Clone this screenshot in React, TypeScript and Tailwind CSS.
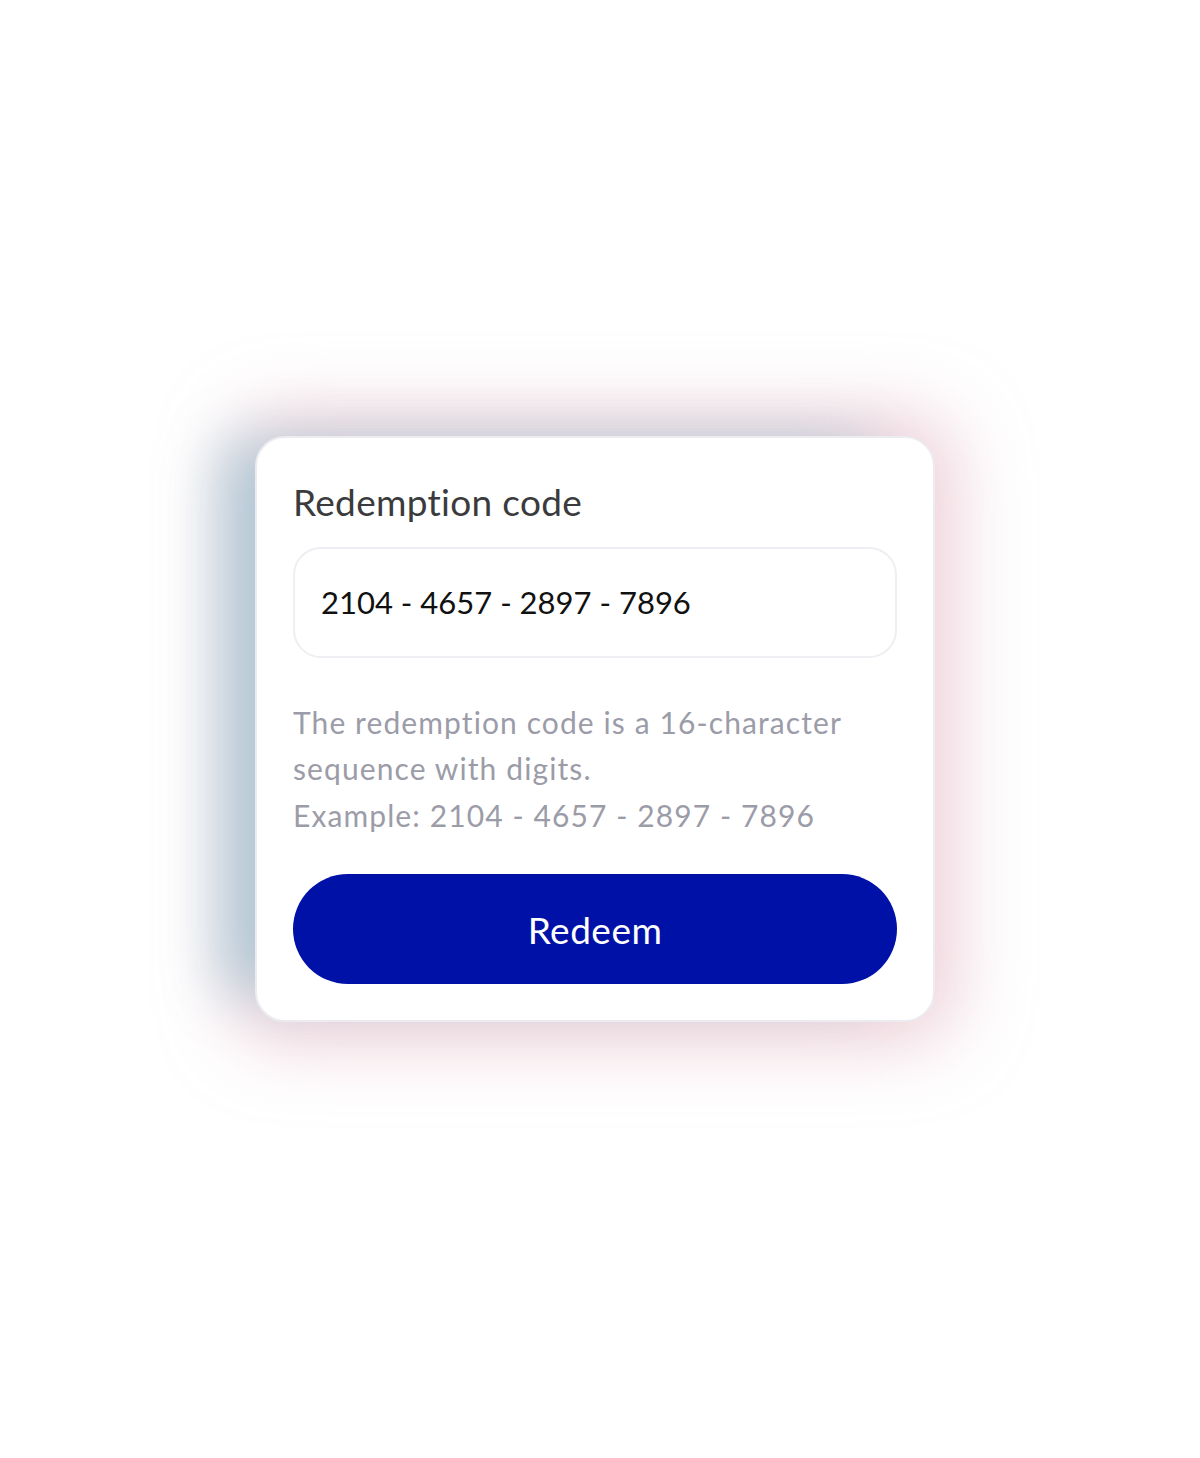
export default function App() {
  return (
    <div className="flex min-h-[1458px] items-center justify-center bg-white pr-[10px] font-['Lato','Noto_Sans',sans-serif]">
      <div className="w-[680px] rounded-[30px] border-2 border-[#ebebf0] bg-white px-[36px] pt-[42px] pb-[36px] shadow-[-52px_-12px_58px_-18px_rgba(160,195,210,0.8),0_0_70px_22px_rgba(222,172,186,0.55)]">
        <h1 className="text-[37px] leading-[44px] tracking-[0.3px] text-[#3b3b3d]">Redemption code</h1>
        <div className="mt-[23px] flex h-[111px] items-center rounded-[28px] border-2 border-[#eeeef3] px-[26px] text-[31px] text-[#111]">
          2104 - 4657 - 2897 - 7896
        </div>
        <p className="mt-[41px] text-[30px] leading-[46.5px] tracking-[1.1px] text-[#9b9ca8]">
          The redemption code is a 16-character
          <br />
          sequence with digits.
          <br />
          Example: 2104 - 4657 - 2897 - 7896
        </p>
        <button className="mt-[36px] flex h-[110px] w-full items-center justify-center rounded-full bg-[#0011a8] text-[37px] tracking-[0.5px] text-white">
          Redeem
        </button>
      </div>
    </div>
  );
}
